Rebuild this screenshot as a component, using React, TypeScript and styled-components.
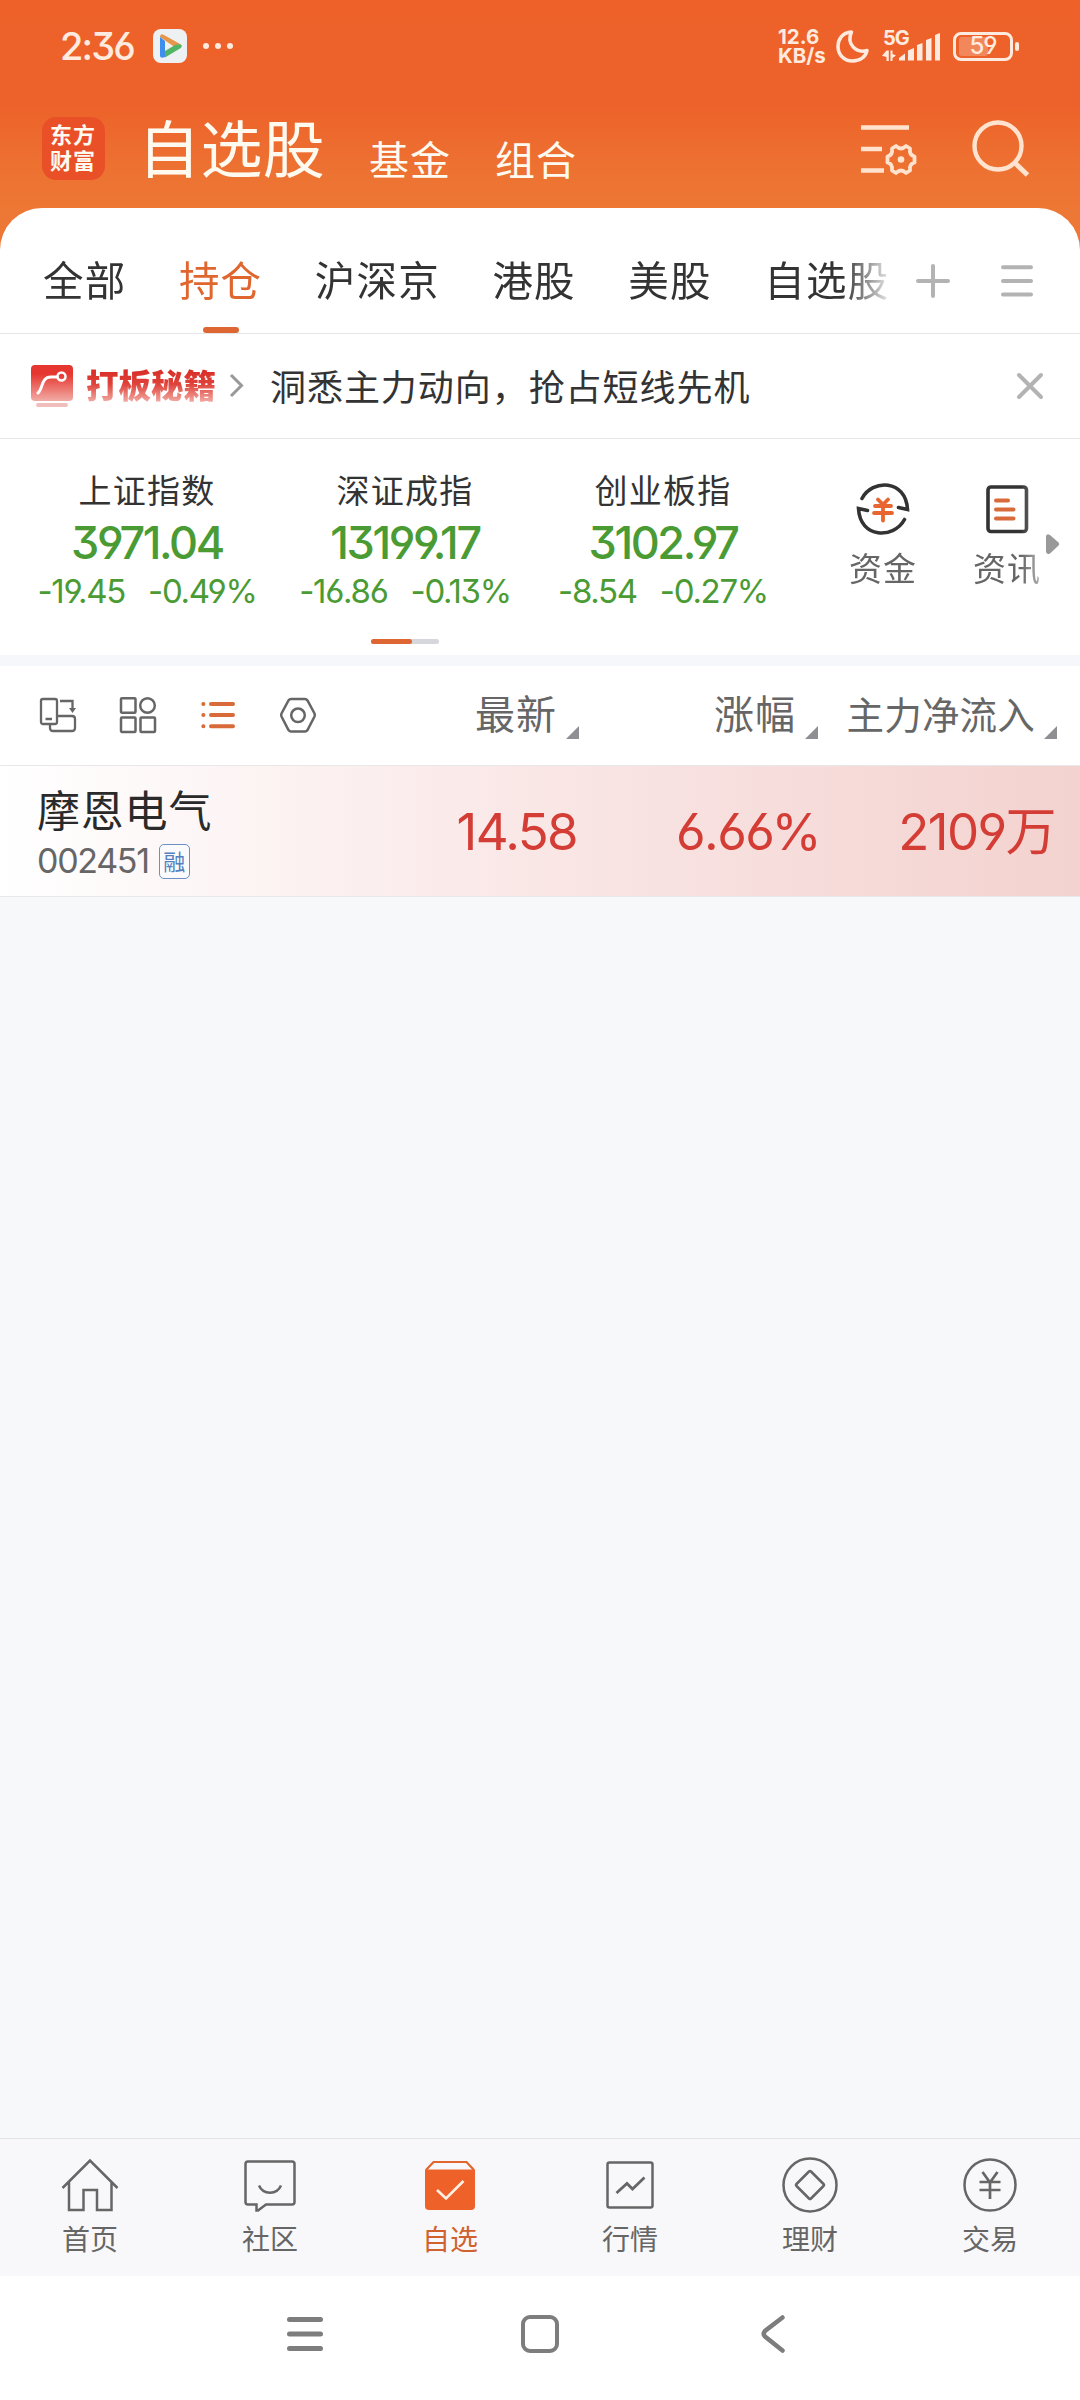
import React from 'react'
import styled, { createGlobalStyle } from 'styled-components'

const GlobalStyle = createGlobalStyle`
  * { box-sizing: border-box; }
  body { margin: 0; background: #fff; }
  svg { display: block; flex: none; overflow: visible; }
`

const CJK = `'Noto Sans CJK SC', sans-serif`
const NUM = `Inter, 'Noto Sans CJK SC', sans-serif`

const Page = styled.div`
  width: 1080px;
  height: 2400px;
  display: flex;
  flex-direction: column;
  font-family: ${CJK};
  color: #333;
  background: #f7f8fa;
  overflow: hidden;
`

const Top = styled.header`
  height: 250px;
  margin-bottom: -42px;
  flex: none;
  background: linear-gradient(#ee622a 0, #ed622a 105px, #ed7232 170px, #ed7734 210px);
`

const StatusBar = styled.div`
  height: 92px;
  padding: 0 61px 0 60px;
  display: flex;
  align-items: center;
  color: #ffeadf;
`

const Clock = styled.span`
  width: 93px;
  font: 500 38px/1 ${NUM};
  letter-spacing: -1.9px;
  font-feature-settings: 'cv03', 'cv04', 'cv09';
`

const StatusDots = styled.span`
  display: flex;
  gap: 6px;
  margin-left: 16px;
  i { width: 6px; height: 6px; border-radius: 3px; background: #ffeadf; }
`

const NetSpeed = styled.span`
  width: 58px;
  margin-left: auto;
  font: 700 20.5px/19px ${NUM};
  letter-spacing: 0;
  white-space: pre;
`

const Signal = styled.span`
  position: relative;
  width: 60px;
  height: 32px;
  margin-left: 13px;
  b { position: absolute; left: 1px; top: -1px; font: 700 20px/19px ${NUM}; letter-spacing: -1px; }
  svg { position: absolute; left: 0; top: 0; }
`

const Battery = styled.span`
  position: relative;
  width: 60px;
  height: 29px;
  margin-left: 11px;
  margin-right: 6px;
  border: 3px solid #ffeadf;
  border-radius: 8px;
  display: flex;
  align-items: center;
  justify-content: center;
  font: 500 24px/1 ${NUM};
  letter-spacing: -1px;
  font-feature-settings: 'cv03', 'cv04';
  &::before { content: ''; position: absolute; left: 3px; top: 2px; width: 29px; height: 19px; border-radius: 3px; background: rgba(255, 234, 223, .28); }
  &::after { content: ''; position: absolute; right: -9px; top: 7px; width: 4px; height: 9px; border-radius: 2px; background: #ffeadf; }
`

const TitleBar = styled.div`
  height: 116px;
  padding: 0 49px 0 42px;
  display: flex;
  color: #fffaf0;
`

const Logo = styled.div`
  width: 63px;
  height: 63px;
  margin-top: 25px;
  border-radius: 14px;
  background: #ea5027;
  padding: 6px 0 0 8px;
  font: 700 22px/26px 'Liberation Sans', ${CJK};
  letter-spacing: 1px;
`

const MainTitle = styled.h1`
  margin: 9px 0 0 33px;
  width: 231px;
  font: 400 62px/90px ${CJK};
  letter-spacing: 0.4px;
`

const SubTitle = styled.span`
  margin-top: 36px;
  width: 126px;
  font: 400 40px/60px ${CJK};
  letter-spacing: 1px;
`

const TitleIcons = styled.div`
  display: flex;
  gap: 57px;
  margin: 26px 0 0 auto;
`

const Panel = styled.section`
  flex: none;
  background: #fff;
  border-radius: 42px 42px 0 0;
`

const TabRow = styled.nav`
  height: 126px;
  padding: 0 47px 0 43px;
  display: flex;
  border-bottom: 1px solid #e6e6e6;
`

const TabScroll = styled.div`
  width: 847px;
  display: flex;
  gap: 52.5px;
  overflow: hidden;
  mask-image: linear-gradient(90deg, #000 800px, transparent 852px);
`

const Tab = styled.div<{ $active?: boolean }>`
  flex: none;
  display: flex;
  flex-direction: column;
  justify-content: space-between;
  align-items: center;
  padding-top: 41px;
  font-size: 40.5px;
  line-height: 60px;
  letter-spacing: 1.2px;
  color: ${p => (p.$active ? '#e0662f' : '#333')};
  &::after {
    content: '';
    width: 36px;
    height: 6px;
    border-radius: 3px;
    background: ${p => (p.$active ? '#dd6633' : 'transparent')};
  }
`

const TabActions = styled.div`
  display: flex;
  gap: 51px;
  margin: 56px 0 0 26px;
`

const Promo = styled.div`
  height: 105px;
  padding: 0 37px 0 30px;
  display: flex;
  align-items: center;
  border-bottom: 1px solid #e6e6e6;
`

const PromoTag = styled.span`
  margin: 0 13px 4px 13px;
  font: 900 32.5px/48px ${CJK};
  background: linear-gradient(#d9302a 12px, #de433a 24px, #f2aaa3 42px);
  background-clip: text;
  -webkit-background-clip: text;
  color: transparent;
`

const PromoText = styled.span`
  margin: 0 auto 3px 26px;
  font-size: 36px;
  line-height: 52px;
  letter-spacing: 0.95px;
`

const Market = styled.div`
  position: relative;
  height: 216px;
  padding: 27px 0 0 18px;
  display: flex;
  overflow: hidden;
`

const Quote = styled.div`
  width: 258px;
  flex: none;
  text-align: center;
`

const QuoteName = styled.div`
  font-size: 33px;
  line-height: 46px;
  letter-spacing: 1.2px;
`

const QuotePrice = styled.div`
  font: 550 45px/61px ${NUM};
  letter-spacing: -2.4px;
  font-feature-settings: 'cv03', 'cv04', 'cv09';
  color: #4b9b35;
`

const QuoteChange = styled.div`
  display: flex;
  justify-content: center;
  gap: 23px;
  font: 400 33px/36px ${NUM};
  letter-spacing: -1.3px;
  font-feature-settings: 'cv03', 'cv04', 'cv09';
  color: #4b9b35;
`

const Tools = styled.div`
  display: flex;
  flex: none;
  margin: 13px 0 0 29px;
  mask-image: linear-gradient(90deg, #000 200px, rgba(0, 0, 0, .5) 220px);
`

const Tool = styled.div`
  width: 124px;
  display: flex;
  flex-direction: column;
  align-items: center;
  font-size: 33px;
  line-height: 56px;
  letter-spacing: 1px;
  color: #666;
`

const MoreArrow = styled.svg`
  position: absolute;
  left: 1046px;
  top: 95px;
`

const Pager = styled.div`
  position: absolute;
  left: 371px;
  top: 200px;
  width: 68px;
  height: 5px;
  border-radius: 3px;
  background: #d6d7dc;
  &::before { content: ''; display: block; width: 41px; height: 5px; border-radius: 3px; background: #dd6633; }
`

const Band = styled.div`
  height: 11px;
  flex: none;
  background: #f6f7fa;
`

const Columns = styled.div`
  flex: none;
  display: grid;
  grid-template-columns: 340px 239px 239px 239px;
  align-items: center;
`

const TableHead = styled(Columns)`
  height: 100px;
  background: #fff;
  border-bottom: 1px solid #e8e8ea;
`

const ViewIcons = styled.div`
  display: flex;
  gap: 44px;
  padding: 0 0 2px 40px;
`

const HeadCell = styled.div<{ $size?: number }>`
  display: flex;
  justify-content: flex-end;
  align-items: center;
  height: 60px;
  white-space: nowrap;
  font-size: ${p => p.$size || 40}px;
  letter-spacing: ${p => (p.$size ? 0.2 : 1)}px;
  color: #666;
  span { margin: -7px 0 0 -20px; }
  svg { align-self: flex-end; margin: 0 0 7px 9px; }
`

const StockRow = styled(Columns)`
  height: 131px;
  border-bottom: 1px solid #e8e8ea;
  background: linear-gradient(90deg, #fff 0, #fdf5f5 220px, #f9e6e5 560px, #f3d2cf 1080px);
`

const StockName = styled.div`
  padding-left: 37px;
  font-size: 43px;
  line-height: 58px;
  letter-spacing: 0.8px;
  color: #2a2a2a;
`

const StockCode = styled.div`
  height: 46px;
  padding: 2px 0 0 37px;
  display: flex;
  align-items: center;
  gap: 10px;
  font: 400 34px/1 ${NUM};
  letter-spacing: -1.3px;
  color: #666;
`

const MarginBadge = styled.span`
  width: 31px;
  height: 35px;
  border: 1.5px solid #6a90c4;
  border-radius: 5px;
  font: 400 22px/31px ${CJK};
  letter-spacing: 0;
  text-align: center;
  color: #5580c0;
  background: #fbfbfe;
`

const Value = styled.div<{ $shift?: number }>`
  padding-top: 2px;
  margin-right: ${p => p.$shift || 0}px;
  text-align: right;
  white-space: nowrap;
  font: 400 51px/64px ${NUM};
  letter-spacing: -1.6px;
  font-feature-settings: 'cv03', 'cv04';
  color: #d43d35;
`

const Blank = styled.main`
  flex: 1;
`

const TabBar = styled.nav`
  height: 138px;
  flex: none;
  display: flex;
  border-top: 1px solid #e2e2e5;
  background: #f8f8fa;
`

const TabItem = styled.div<{ $active?: boolean }>`
  width: 180px;
  padding-top: 16px;
  display: flex;
  flex-direction: column;
  align-items: center;
  font-size: 28px;
  line-height: 46px;
  color: ${p => (p.$active ? '#d0622f' : '#666')};
`

const SystemNav = styled.div`
  height: 124px;
  flex: none;
  padding: 38px 294px 0 286px;
  display: grid;
  grid-template-columns: 234px 241px 24px;
  background: #fff;
`

const quotes = [
  { name: '上证指数', price: '3971.04', diff: '-19.45', rate: '-0.49%' },
  { name: '深证成指', price: '13199.17', diff: '-16.86', rate: '-0.13%' },
  { name: '创业板指', price: '3102.97', diff: '-8.54', rate: '-0.27%' },
]

const tabs = ['全部', '持仓', '沪深京', '港股', '美股', '自选股']

const Corner = () => (
  <svg width="13" height="13"><path d="M13 0V13H0Z" fill="#8e8e93" /></svg>
)

const line = { fill: 'none', stroke: '#666', strokeWidth: 2.5 }

const navItems = [
  {
    name: '首页',
    icon: <path {...line} d="M2.500 33 30 5.500 57.500 33M9 27V55H23.500V35H37V55H51.500V27" />,
  },
  {
    name: '社区',
    icon: (
      <g {...line}>
        <path d="M8 6.500H52Q54.500 6.500 54.500 9V47Q54.500 49.500 52 49.500H26L18 55.500H16.500V49.500H8Q5.500 49.500 5.500 47V9Q5.500 6.500 8 6.500Z" />
        <path d="M19 30.500C23 40 37 40 41 30.500" />
      </g>
    ),
  },
  {
    name: '自选',
    icon: (
      <g>
        <path d="M6 15 13.500 7H46.500L54 15" fill="none" stroke="#e0662f" strokeWidth="2.200" />
        <path d="M5 14.500H55V51Q55 55 51 55H9Q5 55 5 51Z" fill="#ee622a" />
        <path d="M17 35 26 43.500 43.500 26" fill="none" stroke="#fff0e4" strokeWidth="2.600" />
      </g>
    ),
  },
  {
    name: '行情',
    icon: (
      <g {...line}>
        <rect x="7.500" y="7.500" width="45" height="45" rx="2" />
        <path d="M16.500 38 27 28.500 32.500 34 44.500 22.500" strokeWidth="2.800" />
      </g>
    ),
  },
  {
    name: '理财',
    icon: (
      <g {...line}>
        <circle cx="30" cy="30" r="26.500" />
        <path d="M29 16.500Q30 15.500 31 16.500L43.500 29Q44.500 30 43.500 31L31 43.500Q30 44.500 29 43.500L16.500 31Q15.500 30 16.500 29Z" />
      </g>
    ),
  },
  {
    name: '交易',
    icon: (
      <g {...line}>
        <circle cx="30" cy="30" r="25.500" />
        <path d="M22.500 17 30 27.500 37.500 17M30 27.500V44M19.500 27H40.500M19.500 35H40.500" strokeWidth="2.700" />
      </g>
    ),
  },
]

const App: React.FC = () => {
  return (
    <Page>
      <GlobalStyle />
      <Top>
        <StatusBar>
          <Clock>2:36</Clock>
          <svg width="34" height="34" viewBox="0 0 34 34">
            <rect width="34" height="34" rx="8" fill="#eef1f4" />
            <path d="M7 8Q7 4 11 6L28 15.500 23 19Z" fill="#e5964a" />
            <path d="M28 15.500Q30 17.500 27 19.500L12 28.500V22L23 15.500Z" fill="#52b566" />
            <path d="M7 8V27Q7.500 30 12 28V12Z" fill="#3f8eee" />
          </svg>
          <StatusDots><i /><i /><i /></StatusDots>
          <NetSpeed>{'12.6\nKB/s'}</NetSpeed>
          <svg width="33" height="33" viewBox="0 0 33 33">
            <path d="M15.500 2C6 2.500 2 9.500 2 16.500C2 25 8.500 31 16.500 31C24 31 29.500 27 31 20.500C20 23.500 10 14 15.500 2Z" fill="none" stroke="#ffeadf" strokeWidth="3.500" strokeLinejoin="round" />
          </svg>
          <Signal>
            <b>5G</b>
            <svg width="60" height="32" fill="#ffeadf">
              <path d="M4.500 20.500H6.800V31H4.500V27L0 25.800ZM8.500 20.500H10.500V24L14 25.500 10.500 28V31H8.500Z" />
              <path d="M17 28 23 23.500V30.500H17ZM26 20.500 32 18V30.500H26ZM35 15 40.500 13V30.500H35ZM44 10 49.500 8V30.500H44ZM53 5 58 3V30.500H53Z" />
            </svg>
          </Signal>
          <Battery>59</Battery>
        </StatusBar>
        <TitleBar>
          <Logo>东方<br />财富</Logo>
          <MainTitle>自选股</MainTitle>
          <SubTitle>基金</SubTitle>
          <SubTitle>组合</SubTitle>
          <TitleIcons>
            <svg width="56" height="60" viewBox="0 0 56 60" fill="none" stroke="#ffe3cf" strokeWidth="4.400">
              <path d="M1 9.500H49M1 31H22M1 52.500H24" />
              <path d="M36 28Q41 33 46 28L50 30.500Q49 37 54.500 38.500V44.500Q49 46 50 52.500L46 55Q41 50 36 55L32 52.500Q33 46 27.500 44.500V38.500Q33 37 32 30.500Z" strokeWidth="3.800" strokeLinejoin="round" />
              <circle cx="41" cy="41.500" r="3.300" fill="#ffe3cf" stroke="none" />
            </svg>
            <svg width="58" height="60" viewBox="0 0 58 60" fill="none" stroke="#ffe3cf" strokeWidth="4.400">
              <circle cx="25" cy="28" r="23.500" />
              <path d="M42 45 54.500 57" strokeWidth="5" />
            </svg>
          </TitleIcons>
        </TitleBar>
      </Top>

      <Panel>
        <TabRow>
          <TabScroll>
            {tabs.map(t => <Tab key={t} $active={t === '持仓'}>{t}</Tab>)}
          </TabScroll>
          <TabActions>
            <svg width="34" height="34" stroke="#b3b3b3" strokeWidth="4" strokeLinecap="round"><path d="M2 17H32M17 2V32" /></svg>
            <svg width="32" height="34" stroke="#b3b3b3" strokeWidth="4" strokeLinecap="round"><path d="M2 3.300H30M2 17H30M2 30.500H30" /></svg>
          </TabActions>
        </TabRow>
        <Promo>
          <svg width="43" height="42" viewBox="0 0 43 42">
            <defs>
              <linearGradient id="tag" x1="0" y1="0" x2="0" y2="1">
                <stop offset="0.250" stopColor="#e5372f" />
                <stop offset="1" stopColor="#f2aca6" />
              </linearGradient>
            </defs>
            <rect x="1" y="0" width="42" height="36" rx="4" fill="url(#tag)" />
            <rect x="6" y="38" width="32" height="4" rx="2" fill="#f1bfbb" />
            <path d="M8 28C13 24 11 12 21 12H27" fill="none" stroke="#fff" strokeWidth="3" strokeLinecap="round" />
            <circle cx="31.500" cy="11.500" r="4" fill="none" stroke="#fff" strokeWidth="2.500" />
          </svg>
          <PromoTag>打板秘籍</PromoTag>
          <svg width="15" height="24" fill="none" stroke="#999" strokeWidth="3"><path d="M2 1 12.500 11.500 2 22" /></svg>
          <PromoText>洞悉主力动向，抢占短线先机</PromoText>
          <svg width="26" height="26" stroke="#b3b3b3" strokeWidth="4" strokeLinecap="round"><path d="M2 2 24 24M24 2 2 24" /></svg>
        </Promo>
        <Market>
          {quotes.map(q => (
            <Quote key={q.name}>
              <QuoteName>{q.name}</QuoteName>
              <QuotePrice>{q.price}</QuotePrice>
              <QuoteChange><span>{q.diff}</span><span>{q.rate}</span></QuoteChange>
            </Quote>
          ))}
          <Tools>
            <Tool>
              <svg width="60" height="60" viewBox="0 0 60 60" fill="none" stroke="#333" strokeWidth="3.600" strokeLinecap="round">
                <path d="M9 19.500C19 0 53 0 54.500 30.500L45.500 28.500" />
                <path d="M51.500 40.500C41 60 7 60 5.500 29.500L14.500 31.500" />
                <path d="M25 20.500 30 25.500 35 20.500M30 25.500V41.500M22 27H38M21 34H39" stroke="#e8652f" strokeWidth="3.800" />
              </svg>
              资金
            </Tool>
            <Tool>
              <svg width="60" height="60" viewBox="0 0 60 60" fill="none" stroke="#333" strokeWidth="3.600" strokeLinecap="round">
                <rect x="11" y="8" width="38.500" height="44.500" rx="3" />
                <path d="M19 21.500H31M19 30.500H36.500M19 39.500H36.500" stroke="#d96a3a" strokeWidth="4" />
              </svg>
              资讯
            </Tool>
          </Tools>
          <MoreArrow width="14" height="20"><path d="M0 2Q1-1 4 1L12.500 8.500Q14 10 12.500 11.500L4 19.500Q1 21 0 18Z" fill="#999" /></MoreArrow>
          <Pager />
        </Market>
      </Panel>
      <Band />

      <TableHead>
        <ViewIcons>
          <svg width="36" height="36" viewBox="0 0 36 36" fill="none" stroke="#666" strokeWidth="2.300">
            <rect x="1" y="2" width="16" height="25" rx="2" />
            <path d="M5.500 22H12M20 4H32.500V12M17 19H32Q35 19 35 22V31Q35 34 32 34H13Q10 34 10 31V27" />
            <path d="M29 11H36L32.500 16Z" fill="#666" stroke="none" />
          </svg>
          <svg width="36" height="36" viewBox="0 0 36 36" fill="none" stroke="#666" strokeWidth="2.500">
            <rect x="1" y="1.200" width="14.500" height="14.500" rx="1" />
            <circle cx="27.500" cy="8.500" r="7.300" />
            <rect x="1" y="20.500" width="14.500" height="14.500" rx="1" />
            <rect x="20.500" y="20.500" width="14.500" height="14.500" rx="1" />
          </svg>
          <svg width="36" height="36" viewBox="0 0 36 36" stroke="#d96a3a" strokeWidth="4" strokeLinecap="round">
            <path d="M3.300 7H3.400M11 7H33M3.300 18H3.400M11 18H33M3.300 29.300H3.400M11 29.300H33" />
          </svg>
          <svg width="36" height="36" viewBox="0 0 36 36" fill="none" stroke="#666" strokeWidth="2.500">
            <path d="M11 2H25Q26.500 2 27.500 3.500L34.500 16.500Q35.200 18 34.500 19.500L27.500 33Q26.500 34.500 25 34.500H11Q9.500 34.500 8.500 33L1.500 19.500Q.800 18 1.500 16.500L8.500 3.500Q9.500 2 11 2Z" />
            <circle cx="18" cy="18.300" r="6.800" />
          </svg>
        </ViewIcons>
        <HeadCell><span>最新</span><Corner /></HeadCell>
        <HeadCell><span>涨幅</span><Corner /></HeadCell>
        <HeadCell $size={37.5}><span>主力净流入</span><Corner /></HeadCell>
      </TableHead>
      <StockRow>
        <div>
          <StockName>摩恩电气</StockName>
          <StockCode>002451<MarginBadge>融</MarginBadge></StockCode>
        </div>
        <Value $shift={2}>14.58</Value>
        <Value $shift={-2}>6.66%</Value>
        <Value $shift={2}>2109万</Value>
      </StockRow>
      <Blank />

      <TabBar>
        {navItems.map(n => (
          <TabItem key={n.name} $active={n.name === '自选'}>
            <svg width="60" height="60" viewBox="0 0 60 60">{n.icon}</svg>
            {n.name}
          </TabItem>
        ))}
      </TabBar>
      <SystemNav>
        <svg width="38" height="40" stroke="#7d7d7d" strokeWidth="5" strokeLinecap="round"><path d="M3.500 5.500H34.500M3.500 20H34.500M3.500 34.500H34.500" /></svg>
        <svg width="40" height="40" fill="none" stroke="#7d7d7d" strokeWidth="4"><rect x="3" y="3" width="34" height="34" rx="7" /></svg>
        <svg width="24" height="40" fill="none" stroke="#7d7d7d" strokeWidth="4.500" strokeLinecap="round"><path d="M21.500 3.500 4 17Q1.500 20 4 22.500L21.500 36.500" /></svg>
      </SystemNav>
    </Page>
  )
}

export default App
